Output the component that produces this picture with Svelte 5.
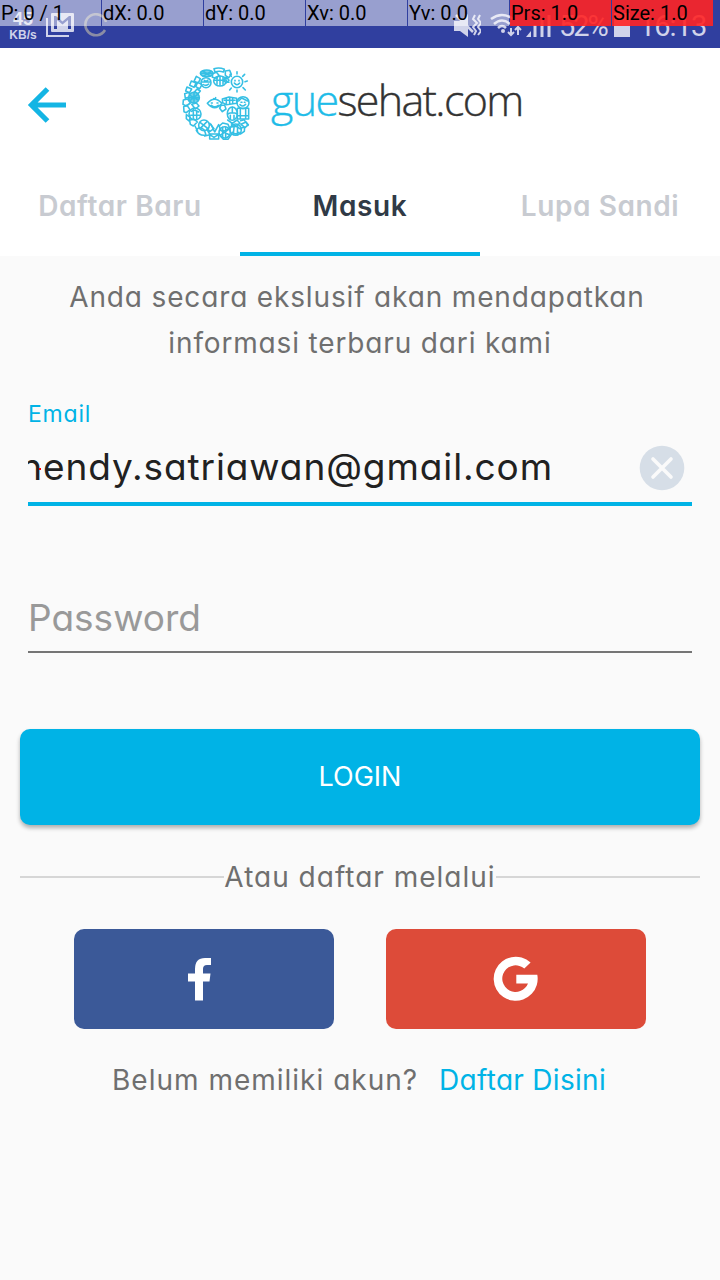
<script>
  const touchCells = [
    { text: 'P: 0 / 1' },
    { text: 'dX: 0.0' },
    { text: 'dY: 0.0' },
    { text: 'Xv: 0.0' },
    { text: 'Yv: 0.0' },
    { text: 'Prs: 1.0', hot: true },
    { text: 'Size: 1.0', hot: true }
  ];
</script>

<main>
  <div class="status">
    <div class="speed"><b>45</b><span>KB/s</span></div>
    <svg class="mail" width="28" height="25" viewBox="0 0 28 25"><path d="M1 5V23H23" fill="none" stroke="#d0d3ea" stroke-width="2"/><path fill-rule="evenodd" d="M6 0H27Q28 0 28 1V18Q28 19 27 19H6Q5 19 5 18V1Q5 0 6 0ZM8 3V16H11V7L16.500 11.500L22 7V16H25V3H23L16.500 8.500L10 3Z" fill="#d0d3ea"/></svg>
    <svg class="ring" width="24" height="24" viewBox="0 0 24 24"><path d="M21 17A10.500 10.500 0 1 1 22 9" fill="none" stroke="#8b8da5" stroke-width="2.600"/></svg>
    <svg class="mute" width="28" height="28" viewBox="0 0 28 28"><path d="M1 9H7L15 2V25L7 19H1Z" fill="#d0d3ea"/><path d="M3 3L20 20" stroke="#d0d3ea" stroke-width="2.500"/><path d="M22 3L20 7L24 11L20 15L23 19L21 23M27 3L25 7L28 11L25 15L28 19L25 23" fill="none" stroke="#d0d3ea" stroke-width="2"/></svg>
    <svg class="signal" width="62" height="28" viewBox="0 0 62 28"><g fill="none" stroke="#d0d3ea" stroke-width="2.500"><path d="M1 7Q12-1 23 7M4 12Q12 5 20 12M8 16Q12 12 16 16"/><path d="M21 16V23M18 20L21 23L24 20M28 23V15M25 18L28 15L31 18" stroke-width="2"/><path d="M45 25V13M52 25V8M59 25V3" stroke-width="3"/></g><circle cx="13" cy="19" r="2" fill="#d0d3ea"/><path d="M36 25H41V19Z" fill="#d0d3ea"/></svg>
    <span class="battery-label">52%</span><i class="battery"></i><span class="clock">16:13</span>
    <div class="pointer">
      {#each touchCells as c}<span class:hot={c.hot}>{c.text}</span>{/each}
    </div>
  </div>

  <header>
    <svg class="back" width="40" height="38" viewBox="0 0 40 38"><path d="M20.500 3L4.500 19L20.500 35M5 19H39" fill="none" stroke="#14b5e4" stroke-width="5.200"/></svg>
    <svg class="mark" width="72" height="74" viewBox="33 36 216 222" fill="none" stroke="#35bfe4" stroke-width="4.700" stroke-linejoin="round" stroke-linecap="round">
      <circle cx="201" cy="81" r="17"/><path d="M201 57V50M218 64L224 58M225 80L232 78M219 98L226 105M201 105V111M184 99L179 105M177 82H171M184 64L180 58M193 84Q201 94 209 84M195 76V78M207 76V78"/>
      <path d="M132 41Q148 36 163 43L160 51Q148 46 135 51ZM166 48L179 46L184 58L176 68L166 61ZM128 56L139 52L147 61L140 70L127 67Z"/>
      <ellipse cx="110" cy="55" rx="19" ry="10" fill="#79d3ec"/><path d="M92 55H128M99 48L121 63M99 64L123 49"/>
      <ellipse cx="150" cy="78" rx="19" ry="15"/><path d="M133 76H166M141 67V88M150 64V91M159 67V88M169 66L177 76L168 84L161 75Z"/>
      <circle cx="108" cy="83" r="15"/><path d="M96 81H120M100 89Q109 94 116 87M103 76L108 80L114 75"/>
      <path d="M79 64L91 71L85 84L72 79ZM64 78L78 84L72 97L59 91ZM83 82L96 89L89 101L77 95ZM51 96L65 102L59 113L47 108ZM44 116L57 112L60 125L46 130ZM81 102L91 108L84 116L74 110Z"/>
      <circle cx="72" cy="128" r="16" fill="#72d0e9"/><path d="M60 121L84 135M61 136L82 119M72 112V144M57 128H88M40 135L53 132L61 144L49 153L39 148ZM65 148L79 144L87 153L76 162Z"/>
      <path d="M41 155L51 151L60 164L49 173L42 170Z"/><circle cx="75" cy="177" r="18"/><path d="M64 169Q73 162 86 171M62 181H89M70 163V192M80 168V192M49 179L61 187L57 198L49 191ZM59 196L72 192L82 201L70 213L61 208Z"/>
      <circle cx="102" cy="211" r="16"/><path d="M91 203L114 221M93 218L111 200M83 221Q91 214 103 225L108 240Q88 244 79 226ZM75 213L83 229M119 205L132 221L120 229L111 221M112 225L120 239L104 243"/>
      <path d="M119 237H146V252H119ZM119 239L132 247L146 238M123 208L134 231L146 209M148 213L158 204L174 208L179 219L165 228L151 225Z"/>
      <circle cx="164" cy="232" r="17"/><path d="M150 225L179 240M152 240L176 223M158 217V249M167 216V248M147 237L160 253H174L184 239"/>
      <circle cx="197" cy="224" r="17"/><path d="M185 216Q199 209 211 222M187 232Q198 241 207 232M193 210L190 235M203 210L202 239M213 208L228 201L235 209L225 218ZM214 219L224 216L223 229L211 237"/>
      <path d="M112 145Q133 120 156 145Q134 172 112 145ZM124 151Q134 160 145 151M124 144H127M141 144H144M131 131Q136 133 137 128"/>
      <path d="M157 132L177 126L200 130V145L169 149L158 143ZM163 136H195M169 129V145M179 128V145M188 130V143M153 151L164 151L168 162L157 170L149 160Z"/>
      <circle cx="219" cy="143" r="18"/><path d="M206 138L215 129L233 138M210 149Q219 158 227 148M213 142H216M223 142H225M202 160H236V192H202ZM211 163V189M227 162V189M203 182H235"/>
      <ellipse cx="187" cy="176" rx="15" ry="20"/><path d="M187 157V174M173 177Q187 169 202 177M181 181V193M192 181V193M173 195L187 205L201 195L210 205L196 212L184 207M212 197L222 194L234 211"/>
    </svg>
    <div class="brand"><span>gue</span>sehat.com</div>
  </header>

  <nav>
    <span class="t1">Daftar Baru</span><span class="on t2">Masuk</span><span class="t3">Lupa Sandi</span>
  </nav>

  <p class="intro"><span class="i1">Anda secara ekslusif akan mendapatkan</span><span class="i2">informasi terbaru dari kami</span></p>

  <section class="field email">
    <label for="email">Email</label>
    <div class="row">
      <div class="value" id="email"><span>hendy.satriawan@gmail.com</span><i></i></div>
      <svg width="46" height="46" viewBox="0 0 46 46"><circle cx="23" cy="23" r="22.300" fill="#d6dee7"/><path d="M14 14L32 32M32 14L14 32" stroke="#fafafa" stroke-width="3.600" stroke-linecap="round"/></svg>
    </div>
  </section>
  <section class="field password"><span>Password</span></section>

  <button class="login"><span>LOGIN</span></button>
  <div class="divider"><i></i><span>Atau daftar melalui</span><i></i></div>

  <div class="social">
    <button class="fb" aria-label="Facebook"><svg width="26" height="44" viewBox="0 0 26 44"><path d="M8 43.500V24.500H1V16.500H8V12Q8 1 18 1H24V8H20Q16 8 16 12V16.500H23.500L22.500 24.500H16V43.500Z" fill="#fff"/></svg></button>
    <button class="gg" aria-label="Google"><svg width="46" height="46" viewBox="0 0 46 46"><path d="M37.600 6.600A22 22 0 1 0 44.300 18.700H23.300V27.400H35A13.300 13.300 0 1 1 31.300 12.600Z" fill="#fff"/></svg></button>
  </div>
  <p class="signup"><span class="s1">Belum memiliki akun?</span><a href="#daftar">Daftar Disini</a></p>
</main>

<style>
  :global(body) { margin: 0; background: #fafafa; }
  main { width: 720px; height: 1280px; overflow: hidden; background: #fafafa; font-family: Inter, sans-serif; font-feature-settings: "cv11"; color: #6f6f6f; font-size: 28px; display: flex; flex-direction: column; }
  main > * { flex-shrink: 0; box-sizing: border-box; }
  span { white-space: nowrap; }
  .status { height: 48px; position: relative; background: #303f9f; color: #d0d3ea; display: flex; align-items: flex-start; overflow: hidden; }
  .speed { width: 28px; margin: 11px 0 0 9px; text-align: center; font: bold 12px/14px "Liberation Sans", sans-serif; }
  .speed b { display: block; font-size: 18px; line-height: 17px; }
  .mail { margin: 13px 0 0 9px; }
  .ring { margin: 13px 0 0 10px; }
  .mute { margin: 12px 0 0 345px; }
  .signal { margin: 12px 0 0 9px; }
  .battery-label { width: 50px; margin: 8px 0 0 7px; font: 29px/36px Roboto, sans-serif; letter-spacing: -2px; }
  .battery { width: 16px; height: 24px; margin: 13px 0 0 5px; background: #d0d3ea; }
  .clock { margin: 8px 0 0 9px; font: 29px/36px Roboto, sans-serif; letter-spacing: -1px; }
  .pointer { position: absolute; left: 0; top: 0; display: flex; gap: 1px; }
  .pointer span { width: 101px; height: 26px; box-sizing: border-box; padding-left: 1px; background: rgba(255,255,255,.5); color: #000; font: 20px/27px Roboto, sans-serif; }
  .pointer .hot { background: rgba(255,36,36,.9); }
  header { height: 108px; background: #fff; display: flex; align-items: flex-start; }
  .back { margin: 38px 0 0 27px; }
  .mark { margin: 19px 0 0 114px; }
  .brand { margin: 22px 0 0 18px; font: 300 43px/60px "Open Sans", sans-serif; letter-spacing: -1.65px; color: #333; -webkit-text-stroke: .4px; white-space: nowrap; }
  .brand span { color: #1fbce8; }
  nav { height: 100px; background: #fff; display: grid; grid-template-columns: repeat(3, 240px); }
  nav span { text-align: center; font-weight: 600; line-height: 100px; letter-spacing: .6px; color: #c8cbd1; height: 100px; box-sizing: border-box; }
  nav .on { color: #303a46; border-bottom: 4px solid #00b3e6; }
  .intro { margin: 18px 0 0; height: 92px; line-height: 46px; letter-spacing: .85px; display: flex; flex-direction: column; align-items: center; }
  .i1 { margin-right: 6px; }
  .field { margin: 0 28px; }
  .email { margin-top: 34px; height: 106px; border-bottom: 4px solid #00b3e6; }
  .email label { display: block; height: 26px; font-size: 23px; line-height: 28px; letter-spacing: .8px; color: #00b3e6; }
  .row { display: flex; justify-content: space-between; margin-top: 19px; padding-right: 7px; }
  .value { width: 525px; height: 50px; position: relative; overflow: hidden; display: flex; justify-content: flex-end; font-size: 37px; line-height: 44px; letter-spacing: .9px; color: #212121; }
  .value i { position: absolute; left: 11px; top: 23px; width: 2px; height: 2px; background: #f00; }
  .password { margin-top: 84px; height: 63px; border-bottom: 2px solid #757575; font-size: 37px; line-height: 56px; color: #999; }
  button { border: 0; padding: 0; font: inherit; font-feature-settings: inherit; color: #fff; }
  .login { margin: 76px 20px 0; height: 96px; padding-bottom: 2px; border-radius: 10px; background: #00b3e6; box-shadow: 0 3px 4px rgba(0,0,0,.3); font-size: 27px; }
  .divider { margin: 29px 20px 0; height: 46px; line-height: 46px; letter-spacing: 1px; display: flex; align-items: center; }
  .divider i { flex: 1; height: 2px; background: #d6d6d6; }
  .social { display: flex; justify-content: center; gap: 52px; margin-top: 29px; }
  .social button { width: 260px; height: 100px; border-radius: 10px; display: flex; align-items: center; justify-content: center; }
  .fb { background: #3b5998; padding-right: 9px; }
  .gg { background: #dd4b39; }
  .signup { margin: 28px 0 0 112px; line-height: 46px; display: flex; gap: 21px; }
  .s1 { letter-spacing: 1px; }
  .signup a { letter-spacing: .3px; color: #00b3e6; text-decoration: none; white-space: nowrap; }
</style>
